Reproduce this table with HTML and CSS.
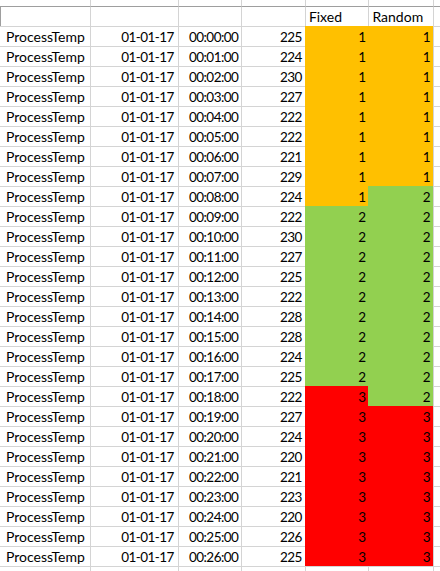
FILE: index.html
```html
<!DOCTYPE html>
<html>
<head>
<meta charset="utf-8">
<link rel="stylesheet" href="styles.css">
</head>
<body>
<div class="sheet" id="sheet">
  <div class="row top">
    <div class="c a"><span class="clip">Tag type</span></div>
    <div class="c b r"><span class="clip">Logging</span></div>
    <div class="c t r"><span class="clip">Timestamp</span></div>
    <div class="c d r"><span class="clip">Reading</span></div>
    <div class="c e"><span class="clip">Grouping</span></div>
    <div class="c f"><span class="clip">Group type</span></div>
    <div class="c g"></div>
  </div>
  <div class="row head">
    <div class="c a"></div>
    <div class="c b"></div>
    <div class="c t"></div>
    <div class="c d"></div>
    <div class="c e">Fixed</div>
    <div class="c f">Random</div>
    <div class="c g"></div>
  </div>
</div>
<script src="script.js"></script>
</body>
</html>
```

FILE: script.js
```js
var data = [
  [225,1,1],[224,1,1],[230,1,1],[227,1,1],[222,1,1],[222,1,1],[221,1,1],[229,1,1],[224,1,2],
  [222,2,2],[230,2,2],[227,2,2],[225,2,2],[222,2,2],[228,2,2],[228,2,2],[224,2,2],[225,2,2],
  [222,3,2],[227,3,3],[224,3,3],[220,3,3],[221,3,3],[223,3,3],[220,3,3],[226,3,3],[225,3,3]
];
var cls = {1:'g1',2:'g2',3:'g3'};
var sheet = document.getElementById('sheet');
function pad(n){ return (n<10?'0':'')+n; }
data.forEach(function(d,i){
  var row = document.createElement('div');
  row.className = 'row';
  row.innerHTML =
    '<div class="c a">ProcessTemp</div>' +
    '<div class="c b r num">01-01-17</div>' +
    '<div class="c t r num">00:' + pad(i) + ':00</div>' +
    '<div class="c d r num">' + d[0] + '</div>' +
    '<div class="c e r num ' + cls[d[1]] + '">' + d[1] + '</div>' +
    '<div class="c f r num ' + cls[d[2]] + '">' + d[2] + '</div>' +
    '<div class="c g"></div>';
  sheet.appendChild(row);
});
var last = document.createElement('div');
last.className = 'row';
last.innerHTML = '<div class="c a"></div><div class="c b"></div><div class="c t"></div><div class="c d"></div><div class="c e"></div><div class="c f"></div><div class="c g"></div>';
sheet.appendChild(last);
```

FILE: styles.css
```css
html, body {
  margin: 0;
  padding: 0;
  background: #ffffff;
}
body {
  width: 440px;
  height: 571px;
  overflow: hidden;
  font-family: Lato, "Open Sans", sans-serif;
  font-size: 14px;
  color: #000000;
}
.sheet {
  display: flex;
  flex-direction: column;
}
.row {
  display: flex;
  height: 20px;
}
.c {
  box-sizing: border-box;
  height: 100%;
  border-top: 1px solid #d4d4d4;
  border-left: 1px solid #d4d4d4;
  display: flex;
  align-items: flex-end;
  line-height: 16px;
  padding: 0 3px 1px 3px;
  white-space: nowrap;
  overflow: hidden;
}
.r { justify-content: flex-end; }
.num { font-size: 13.5px; letter-spacing: -0.55px; }
.a { width: 91px; border-left: none; padding-left: 6px; }
.b { width: 88px; padding-right: 4px; }
.t { width: 64px; }
.d { width: 64px; padding-right: 3px; }
.e { width: 64px; }
.f { width: 65px; }
.g { flex: 1; }
.top { height: 6px; }
.top .c { border-top: none; align-items: flex-start; padding-bottom: 0; }
.clip { margin-top: -16px; }
.head .c { border-top-color: #9e9e9e; }
.head .a { border-left: 1px solid #9e9e9e; padding-left: 4px; }
.g1 { background: #ffc000; border-color: #ffc000; }
.g2 { background: #92d050; border-color: #92d050; }
.g3 { background: #ff0000; border-color: #ff0000; }
```
